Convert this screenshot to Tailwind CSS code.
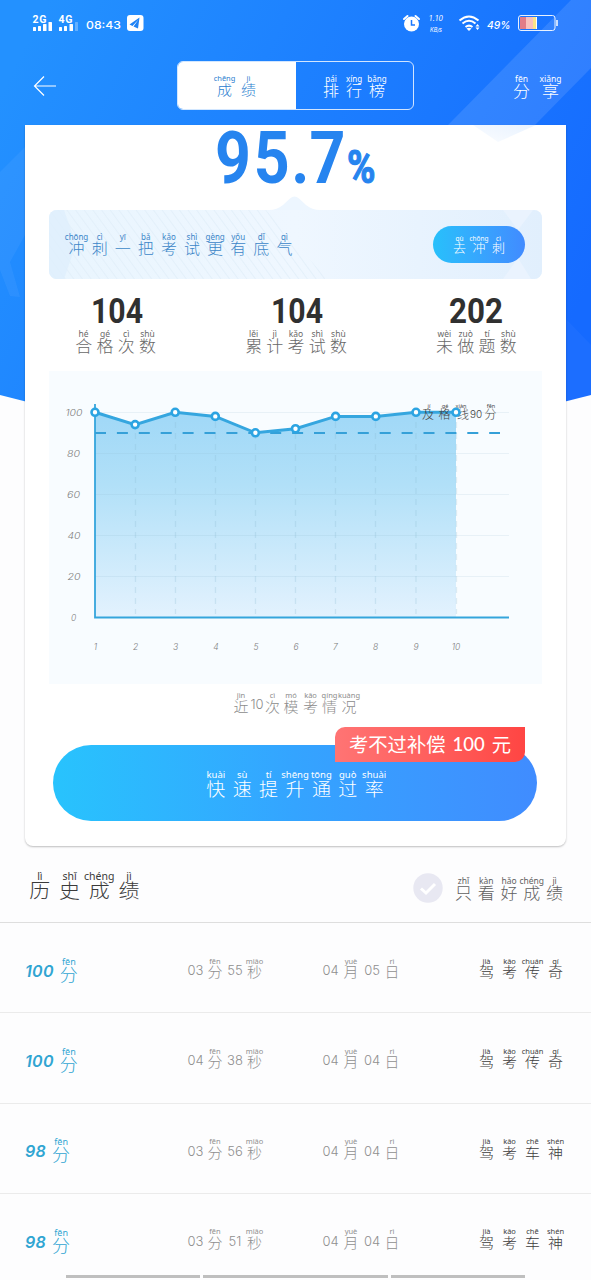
<!DOCTYPE html>
<html lang="zh-CN">
<head>
<meta charset="utf-8">
<title>成绩</title>
<script src="https://cdn.jsdelivr.net/npm/@tailwindcss/browser@4"></script>
</head>
<body class="bg-[#fdfdfe]">
<div class="relative isolate w-[591px] h-[1280px] overflow-hidden font-['Noto_Sans','Noto_Sans_CJK_SC',sans-serif] flex flex-col">
  <!-- header backdrop -->
  <svg class="absolute inset-0 -z-10" width="591" height="470" viewBox="0 0 591 470">
    <defs>
      <linearGradient id="sky" x1="0" y1="0.2" x2="1" y2="0.6"><stop offset="0" stop-color="#2391ff"/><stop offset="1" stop-color="#156aff"/></linearGradient>
    </defs>
    <path d="M0 0H591V395L295 470L0 395Z" fill="url(#sky)"/>
    <path d="M571 0H591V68L535 125L494 143L448 125Z" fill="#fff" fill-opacity=".11"/>
    <path d="M0 172L25 147V235L10 262L20 297L10 296L0 270Z" fill="#fff" fill-opacity=".05"/>
    <path d="M566 319L591 345V395L566 402Z" fill="#fff" fill-opacity=".03"/>
  </svg>

  <!-- status bar -->
  <div class="h-[46px] shrink-0 flex text-white">
    <svg width="591" height="46" viewBox="0 0 591 46" fill="#fff">
      <g font-family="Roboto" font-weight="700" font-size="10.5"><text x="32.5" y="23" textLength="14">2G</text><text x="58.5" y="23" textLength="14">4G</text></g>
      <g><rect x="33" y="27" width="3" height="4" rx=".6"/><rect x="38" y="26" width="3" height="5" rx=".6"/><rect x="43" y="24" width="3.500" height="7" rx=".6"/><rect x="48.500" y="22" width="3.500" height="9" rx=".6"/>
      <rect x="59" y="27" width="3" height="4" rx=".6"/><rect x="64" y="26" width="3" height="5" rx=".6"/><rect x="69.500" y="24" width="3.500" height="7" rx=".6"/><rect x="75" y="22" width="3" height="9" rx=".6" fill-opacity=".3"/></g>
      <text x="86" y="28.500" font-family="Inter" font-weight="500" font-size="10.500" textLength="35" lengthAdjust="spacingAndGlyphs">08:43</text>
      <rect x="127" y="15" width="16.500" height="16" rx="3"/>
      <path d="M139.500 17.500L129.500 24.500L132.500 26L138.500 19.500L133.500 26.500L138 28.500Z" fill="#2083f5"/>
      <circle cx="411.500" cy="24" r="7.500"/><path d="M411.500 20V25H415" stroke="#1a78ff" stroke-width="1.500" fill="none"/>
      <path d="M404 19L407.500 16M415.500 16L419 19" stroke="#fff" stroke-width="2" stroke-linecap="round"/>
      <text x="429" y="21" font-family="Inter" font-style="italic" font-size="7" textLength="14">1.10</text>
      <text x="430" y="32" font-family="Inter" font-style="italic" font-size="5.500" textLength="12">KB/s</text>
      <g fill="none" stroke="#fff" stroke-width="2"><path d="M459.500 20.500Q469 12.500 478.500 20.500M462.500 23.500Q469 18 475.500 23.500M465.500 27Q469 24.300 472.500 27"/></g>
      <path d="M466.500 28.500Q469 27 471.500 28.500L469 31Z"/><path d="M477.500 24L479.500 26.500H475.500ZM477.500 30L479.500 27.500H475.500Z"/>
      <text x="487" y="28.500" font-family="Inter" font-style="italic" font-weight="500" font-size="10" textLength="23.500" lengthAdjust="spacingAndGlyphs">49%</text>
      <rect x="518.500" y="15.500" width="36.500" height="15" rx="2.500" fill="none" stroke="#fff" stroke-opacity=".9"/><path d="M557 20V26" stroke="#fff" stroke-width="1.500"/>
      <rect x="520" y="17" width="6" height="12" fill="#e27c88"/><rect x="526" y="17" width="7" height="12" fill="#f8c0bd"/><rect x="533" y="17" width="3" height="12" fill="#fae487"/><rect x="536" y="17" width="1" height="12" fill="#fff"/>
    </svg>
  </div>

  <!-- navigation -->
  <div class="h-[79px] shrink-0 flex items-center pl-[33px] pr-[26px] justify-between text-white">
    <svg width="24" height="22" viewBox="0 0 24 22" fill="none" stroke="#fff" stroke-width="1.200"><path d="M23 11H1.500M11 1.500L1.500 11L11 20.500"/></svg>
    <div class="w-[237px] h-[49px] ml-[26px] rounded-md border border-white/80 flex overflow-hidden">
      <div class="w-[118px] bg-white text-[#2b80d0] flex items-center justify-center pt-[6px] text-[15px]" data-t="成/chēng/24 绩/jì/24"></div>
      <div class="flex-1 flex items-center justify-center pt-[6px] text-[16px]" data-t="排/pái/23 行/xíng/23 榜/bǎng/23"></div>
    </div>
    <div class="flex pt-2 text-[17px]" data-t="分/fēn/29 享/xiǎng/29"></div>
  </div>

  <!-- score card -->
  <section class="h-[721px] shrink-0 mx-[25px] bg-white rounded-b-lg shadow-[0_1px_2px_rgba(0,0,0,0.25)] flex flex-col">
    <svg class="shrink-0 overflow-visible" width="541" height="85" viewBox="0 0 541 85">
      <defs><linearGradient id="fade" x1="0" y1="1" x2="1" y2="0"><stop offset="0" stop-color="#f8fbff"/><stop offset="1" stop-color="#dfedff"/></linearGradient></defs>
      <path d="M448 0H511L473 17Z" fill="url(#fade)" fill-opacity=".7"/>
      <g font-family="Roboto" font-weight="700" fill="#2684ef">
        <text transform="scale(.87 1)" x="218.500 263 306 327" y="58" font-size="72">95.7</text>
        <text x="322" y="58" font-size="46" stroke="#2684ef" stroke-width="1.200" textLength="28.500" lengthAdjust="spacingAndGlyphs">%</text>
      </g>
      <path d="M244 85Q252 85 258 80L265 73.500Q269.500 69.500 274 73.500L281 80Q287 85 295 85Z" fill="#edf6ff"/>
    </svg>
    <div class="relative isolate h-[69px] shrink-0 mx-6 rounded-lg overflow-hidden bg-[#edf6fe] flex items-center justify-between pl-[16px] pr-[17px]">
      <svg class="absolute inset-0 -z-10" width="493" height="69" viewBox="0 0 493 69">
        <defs>
          <pattern id="hatch" width="7" height="7" patternUnits="userSpaceOnUse" patternTransform="rotate(-36)"><path d="M0 0V7" stroke="#e0eef9" stroke-width="1.500"/></pattern>
          <linearGradient id="tint" x1="0" x2="1" y1="0" y2="0"><stop offset="0" stop-color="#e9f5fe"/><stop offset=".5" stop-color="#eff7ff"/><stop offset="1" stop-color="#e1effd"/></linearGradient>
        </defs>
        <rect width="493" height="69" fill="url(#tint)"/>
        <path d="M0 0H217L278 69H0Z" fill="url(#hatch)"/>
        <path d="M0 0H15L27 34L15 69H0Z" fill="#deeffc" fill-opacity=".8"/>
        <path d="M454 0H484L469 20ZM454 69L469 48L482 69Z" fill="#eaf3fe"/>
      </svg>
      <div class="flex pt-[5px] text-[16px] text-[#3c86c8]" data-t="冲/chōng/23.1 刺/cì/23.1 一/yī/23.1 把/bǎ/23.1 考/kǎo/23.1 试/shì/23.1 更/gèng/23.1 有/yǒu/23.1 底/dǐ/23.1 气/qì/23.1"></div>
      <div class="w-[92px] h-[37px] rounded-full bg-linear-to-r from-[#27c0fb] to-[#418bff] text-white flex items-center justify-center pt-[5px] text-[13px]" data-t="去/qù/19.5 冲/chōng/19.5 刺/cì/19.5"></div>
    </div>
    <div class="h-[92px] shrink-0 flex justify-between pt-[17px] pl-[48px] pr-[47px]">
      <div class="flex flex-col items-center">
        <svg class="overflow-visible" width="54" height="28" viewBox="0 0 54 28"><text x="2" y="27" font-family="Roboto" font-weight="700" font-size="35" fill="#303030" textLength="52" lengthAdjust="spacingAndGlyphs">104</text></svg>
        <div class="flex mt-[12px] text-[17px] text-[#686868]" data-t="合/hé/21.3 格/gé/21.3 次/cì/21.3 数/shù/21.3"></div>
      </div>
      <div class="flex flex-col items-center">
        <svg class="overflow-visible" width="54" height="28" viewBox="0 0 54 28"><text x="2" y="27" font-family="Roboto" font-weight="700" font-size="35" fill="#303030" textLength="52" lengthAdjust="spacingAndGlyphs">104</text></svg>
        <div class="flex mt-[12px] text-[17px] text-[#686868]" data-t="累/lěi/21.2 计/jì/21.2 考/kǎo/21.2 试/shì/21.2 数/shù/21.2"></div>
      </div>
      <div class="flex flex-col items-center">
        <svg class="overflow-visible" width="54" height="28" viewBox="0 0 54 28"><text x="0" y="27" font-family="Roboto" font-weight="700" font-size="35" fill="#303030" textLength="54" lengthAdjust="spacingAndGlyphs">202</text></svg>
        <div class="flex mt-[12px] text-[17px] text-[#686868]" data-t="未/wèi/21.3 做/zuò/21.3 题/tí/21.3 数/shù/21.3"></div>
      </div>
    </div>
    <svg class="shrink-0 mx-6 bg-[#f8fcff]" width="493" height="313" viewBox="49 371 493 313">
      <defs><linearGradient id="area" x1="0" y1="0" x2="0" y2="1"><stop offset="0" stop-color="#a0d8f7"/><stop offset=".35" stop-color="#b1e0f8"/><stop offset="1" stop-color="#e3f2fe"/></linearGradient></defs>
      <path d="M95 412.300L135.100 424.600L175.200 412.300L215.300 416.400L255.400 432.800L295.500 428.700L335.600 416.400H375.800L416 412.300H456V617.500H95Z" fill="url(#area)"/>
      <path d="M95 412.500H509M95 453.500H509M95 494.500H509M95 535.500H509M95 576.500H509" stroke="#8ab4c8" stroke-opacity=".15"/>
      <path d="M135.500 422V614M175.500 422V614M215.500 422V614M255.500 433V614M295.500 433V614M335.500 422V614M375.500 422V614M416 422V614M456.500 422V614" stroke="#86b6cf" stroke-opacity=".25" stroke-width="1.300" stroke-dasharray="6 5"/>
      <path d="M95 404V617.500H509" fill="none" stroke="#35a5dc" stroke-width="1.800"/>
      <path d="M95 433H500" stroke="#35a0d8" stroke-width="2" stroke-dasharray="11 10.900"/>
      <path d="M95 412.300L135.100 424.600L175.200 412.300L215.300 416.400L255.400 432.800L295.500 428.700L335.600 416.400H375.800L416 412.300H456" fill="none" stroke="#35a6df" stroke-width="3"/>
      <g font-family="'Noto Sans CJK SC'" font-weight="300" fill="#444" text-anchor="middle" font-size="12">
        <text x="428" y="418.500">及</text><text x="444.500" y="418.500">格</text><text x="463" y="418.500">线</text><text x="476" y="417.500" font-family="Inter" font-size="10">90</text><text x="490.500" y="418.500">分</text>
        <g font-family="'Noto Sans'" font-weight="400" font-size="5.500"><text x="429" y="407.500">jí</text><text x="445" y="407.500">gé</text><text x="461" y="407.500">xiàn</text><text x="491" y="407.500">fēn</text></g>
      </g>
      <g fill="#fff" stroke="#2ca4e2" stroke-width="2.600"><circle cx="95" cy="412.300" r="3.500"/><circle cx="135.100" cy="424.600" r="3.500"/><circle cx="175.200" cy="412.300" r="3.500"/><circle cx="215.300" cy="416.400" r="3.500"/><circle cx="255.400" cy="432.800" r="3.500"/><circle cx="295.500" cy="428.700" r="3.500"/><circle cx="335.600" cy="416.400" r="3.500"/><circle cx="375.800" cy="416.400" r="3.500"/><circle cx="416" cy="412.300" r="3.500"/><circle cx="456" cy="412.300" r="3.500"/></g>
      <g font-family="Inter" font-style="italic" font-weight="300" font-size="8.500" fill="#808080" text-anchor="middle">
        <text x="74" y="415.500" textLength="17" lengthAdjust="spacingAndGlyphs">100</text><text x="73.500" y="456.500" textLength="13" lengthAdjust="spacingAndGlyphs">80</text><text x="73.500" y="497.500" textLength="13" lengthAdjust="spacingAndGlyphs">60</text><text x="74" y="538.500" textLength="13" lengthAdjust="spacingAndGlyphs">40</text><text x="74" y="579.500" textLength="13" lengthAdjust="spacingAndGlyphs">20</text><text x="73.500" y="620.500">0</text>
        <text x="95.500" y="649.500">1</text><text x="135.500" y="649.500">2</text><text x="175.500" y="649.500">3</text><text x="216" y="649.500">4</text><text x="256" y="649.500">5</text><text x="296" y="649.500">6</text><text x="335.500" y="649.500">7</text><text x="375.500" y="649.500">8</text><text x="416" y="649.500">9</text><text x="456" y="649.500">10</text>
      </g>
    </svg>
    <div class="h-[61px] shrink-0 flex justify-center items-start pt-[14px] text-[15px] text-[#8c8c8c]" data-t="近/jìn/18 10//14 次/cì/17 模/mó/20 考/kǎo/19 情/qíng/19 况/kuàng/20"></div>
    <div class="relative h-[76px] shrink-0 ml-7 mr-[29px] rounded-full bg-linear-to-r from-[#28c3fd] via-[#34a4ff] to-[#408cff] text-white flex items-center justify-center pt-[8px] text-[19px]">
      <div class="flex" data-t="快/kuài/26.4 速/sù/26.4 提/tí/26.4 升/shēng/26.4 通/tōng/26.4 过/guò/26.4 率/shuài/26.4"></div>
      <div class="absolute right-3 -top-[18px] w-[190px] h-[35px] rounded-tl-[10px] rounded-br-[10px] bg-linear-to-r from-[#ff7474] to-[#ff4543] flex items-center justify-center gap-[7px] text-[19.3px] leading-none whitespace-nowrap font-['Noto_Sans_CJK_SC',sans-serif]"><span>考不过补偿</span><span class="font-[Lato] font-medium text-[18.5px]">100</span><span>元</span></div>
    </div>
  </section>

  <!-- history -->
  <div class="h-[77px] shrink-0 border-b border-[#dedede] flex items-center justify-between pl-[25px] pr-[25px]">
    <div class="flex pt-[10px] text-[21px] text-[#3a3a3a]" data-t="历/lì/29.7 史/shǐ/29.7 成/chéng/29.7 绩/jì/29.7"></div>
    <div class="flex items-center gap-[9px]">
      <svg width="30" height="30" viewBox="0 0 30 30" class="mt-[7px]"><circle cx="15" cy="15" r="14.700" fill="#e8e8f2"/><path d="M8 15.500L13 20L22 11" fill="none" stroke="#fff" stroke-width="3"/></svg>
      <div class="flex pt-[15px] text-[17px] text-[#606060]" data-t="只/zhǐ/22.8 看/kàn/22.8 好/hǎo/22.8 成/chéng/22.8 绩/jì/22.8"></div>
    </div>
  </div>
  <div id="history" class="flex flex-col"></div>
  <div class="absolute bottom-[2px] left-[66px] flex gap-[3px]"><i class="w-[134px] h-[3.500px] bg-[#bfbfbf]"></i><i class="w-[185px] h-[3.500px] bg-[#bfbfbf]"></i><i class="w-[134px] h-[3.500px] bg-[#bfbfbf]"></i></div>
</div>

<script>
const rows = [
  ['100', '03', '55', '05', '传/chuán/23 奇/qí/23'],
  ['100', '04', '38', '04', '传/chuán/23 奇/qí/23'],
  ['98', '03', '56', '04', '车/chē/23 神/shén/23'],
  ['98', '03', '51', '04', '车/chē/23 神/shén/23'],
];
document.getElementById('history').innerHTML = rows.map(([score, min, sec, day, rank]) => `
  <div class="h-[90.300px] shrink-0 border-b border-[#ebebeb] grid grid-cols-[162px_134px_157px_1fr] items-center pl-[25px] pt-[6px]">
    <div class="flex items-center gap-0.5 text-[#30a5d2] text-[18px]"><span class="font-[Inter] italic font-semibold text-[16px] leading-none tracking-[0.020em]">${score}</span><span class="flex pt-1" data-t="分/fēn/26"></span></div>
    <div class="flex items-center text-[15px] text-[#8f8f8f]" data-t="${min}//17 分/fēn/22 ${sec}//18 秒/miǎo/21"></div>
    <div class="flex items-center text-[15px] text-[#8f8f8f]" data-t="${'04'}//19 月/yuè/22 ${day}//20 日/rì/20"></div>
    <div class="flex text-[15px] text-[#3c3c3c] -ml-[3px]" data-t="驾/jià/23 考/kǎo/23 ${rank}"></div>
  </div>`).join('');

/* Each token is "character/pinyin/cell width"; the pinyin sits above its character. */
document.querySelectorAll('[data-t]').forEach(el => {
  el.innerHTML = el.dataset.t.split(' ').map(t => {
    const [c, p, w] = t.split('/');
    return p
      ? `<span class="relative inline-block shrink-0 text-center leading-none font-light font-['Noto_Sans_CJK_SC',sans-serif]" style="width:${w}px"><span class="inline-block origin-bottom scale-y-[0.930]">${c}</span><span class="absolute bottom-full left-1/2 -translate-x-1/2 -mb-[0.250em] text-[0.500em] leading-none font-normal font-['Noto_Sans',sans-serif]">${p}</span></span>`
      : `<span class="inline-block shrink-0 text-center leading-none font-light text-[13px] font-[Inter]" style="width:${w}px">${c}</span>`;
  }).join('');
});
</script>
</body>
</html>
